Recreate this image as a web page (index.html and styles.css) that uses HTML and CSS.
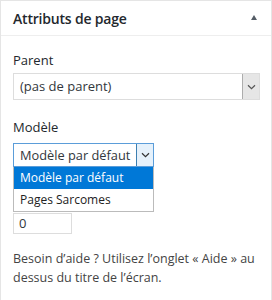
FILE: index.html
```html
<!DOCTYPE html>
<html lang="fr">
<head>
<meta charset="utf-8">
<link rel="stylesheet" href="styles.css">
</head>
<body>
<div class="box">
  <div class="head">
    <h2 class="title">Attributs de page</h2>
    <span class="toggle"></span>
  </div>
  <div class="inside">
    <p class="label">Parent</p>
    <div class="select wide">
      <span class="value">(pas de parent)</span>
      <span class="arrow"><svg width="9" height="6" viewBox="0 0 9 6"><path d="M1 1.2 L4.5 4.6 L8 1.2" fill="none" stroke="#555" stroke-width="1.2"/></svg></span>
    </div>
    <p class="label model">Modèle</p>
    <div class="dropwrap">
      <div class="select narrow focus">
        <span class="value">Modèle par défaut</span>
        <span class="arrow"><svg width="9" height="6" viewBox="0 0 9 6"><path d="M1 1.2 L4.5 4.6 L8 1.2" fill="none" stroke="#333" stroke-width="1.2"/></svg></span>
      </div>
      <ul class="list">
        <li class="opt sel">Modèle par défaut</li>
        <li class="opt">Pages Sarcomes</li>
      </ul>
    </div>
    <div class="num">0</div>
    <p class="help">Besoin d’aide ? Utilisez l’onglet « Aide » au dessus du titre de l’écran.</p>
  </div>
</div>
</body>
</html>
```
FILE: styles.css
```css
html, body { margin: 0; padding: 0; background: #fff; }
body { font-family: "Open Sans", "Noto Sans", sans-serif; color: #444; }
.box {
  width: 272px;
  height: 300px;
  box-sizing: border-box;
  border: 1px solid #e5e5e5;
  border-bottom: none;
  background: #fff;
}
.head {
  height: 34px;
  border-bottom: 1px solid #eee;
  display: flex;
  align-items: center;
  justify-content: space-between;
  padding: 0 14px 0 12px;
}
.title {
  margin: 0;
  font-size: 14px;
  font-weight: 600;
  color: #23282d;
  letter-spacing: -0.2px;
}
.toggle {
  width: 0; height: 0;
  margin-top: -1px;
  border-left: 3.5px solid transparent;
  border-right: 3.5px solid transparent;
  border-bottom: 5px solid #555d66;
}
.inside { padding: 0 12px; }
.label {
  margin: 0;
  padding-top: 12px;
  height: 24px;
  font-size: 13px;
  line-height: 24px;
  color: #23282d;
}
.label.model { padding-top: 15px; }
.select {
  box-sizing: border-box;
  height: 27px;
  border: 1px solid #ddd;
  display: flex;
  align-items: stretch;
  background: #fff;
  font-size: 13px;
  color: #32373c;
}
.select .value { flex: 1; padding-left: 6px; line-height: 25px; white-space: nowrap; overflow: hidden; }
.select .arrow {
  width: 16px;
  display: flex;
  align-items: center;
  justify-content: center;
  background: #e6e6e6;
  border-left: 1px solid #adadad;
}
.select.wide { width: 247px; margin-top: 1px; }
.dropwrap { position: relative; margin-top: 4px; }
.select.narrow { width: 141px; height: 24px; border-color: #5b9dd9; }
.select.narrow .value { line-height: 22px; padding-left: 6px; font-size: 12.8px; }
.select.narrow .arrow { background: #e5f1fb; border-left: 1px solid #3c7fb1; }
.list {
  position: absolute;
  top: 24px;
  left: 0;
  width: 141px;
  box-sizing: border-box;
  margin: 0;
  padding: 0;
  list-style: none;
  border: 1px solid #bbb;
  border-top: none;
  background: #fff;
  z-index: 2;
  font-size: 12px;
}
.opt { height: 22px; line-height: 22px; padding-left: 6px; color: #222; }
.opt.sel { background: #0078d7; color: #fff; }
.num {
  box-sizing: border-box;
  width: 59px;
  height: 21px;
  border: 1px solid #ddd;
  margin-top: 46px;
  font-size: 13px;
  line-height: 19px;
  padding-left: 5px;
  color: #32373c;
}
.help {
  margin: 15px 0 0;
  font-size: 12.5px;
  line-height: 19px;
  color: #444;
}
```
